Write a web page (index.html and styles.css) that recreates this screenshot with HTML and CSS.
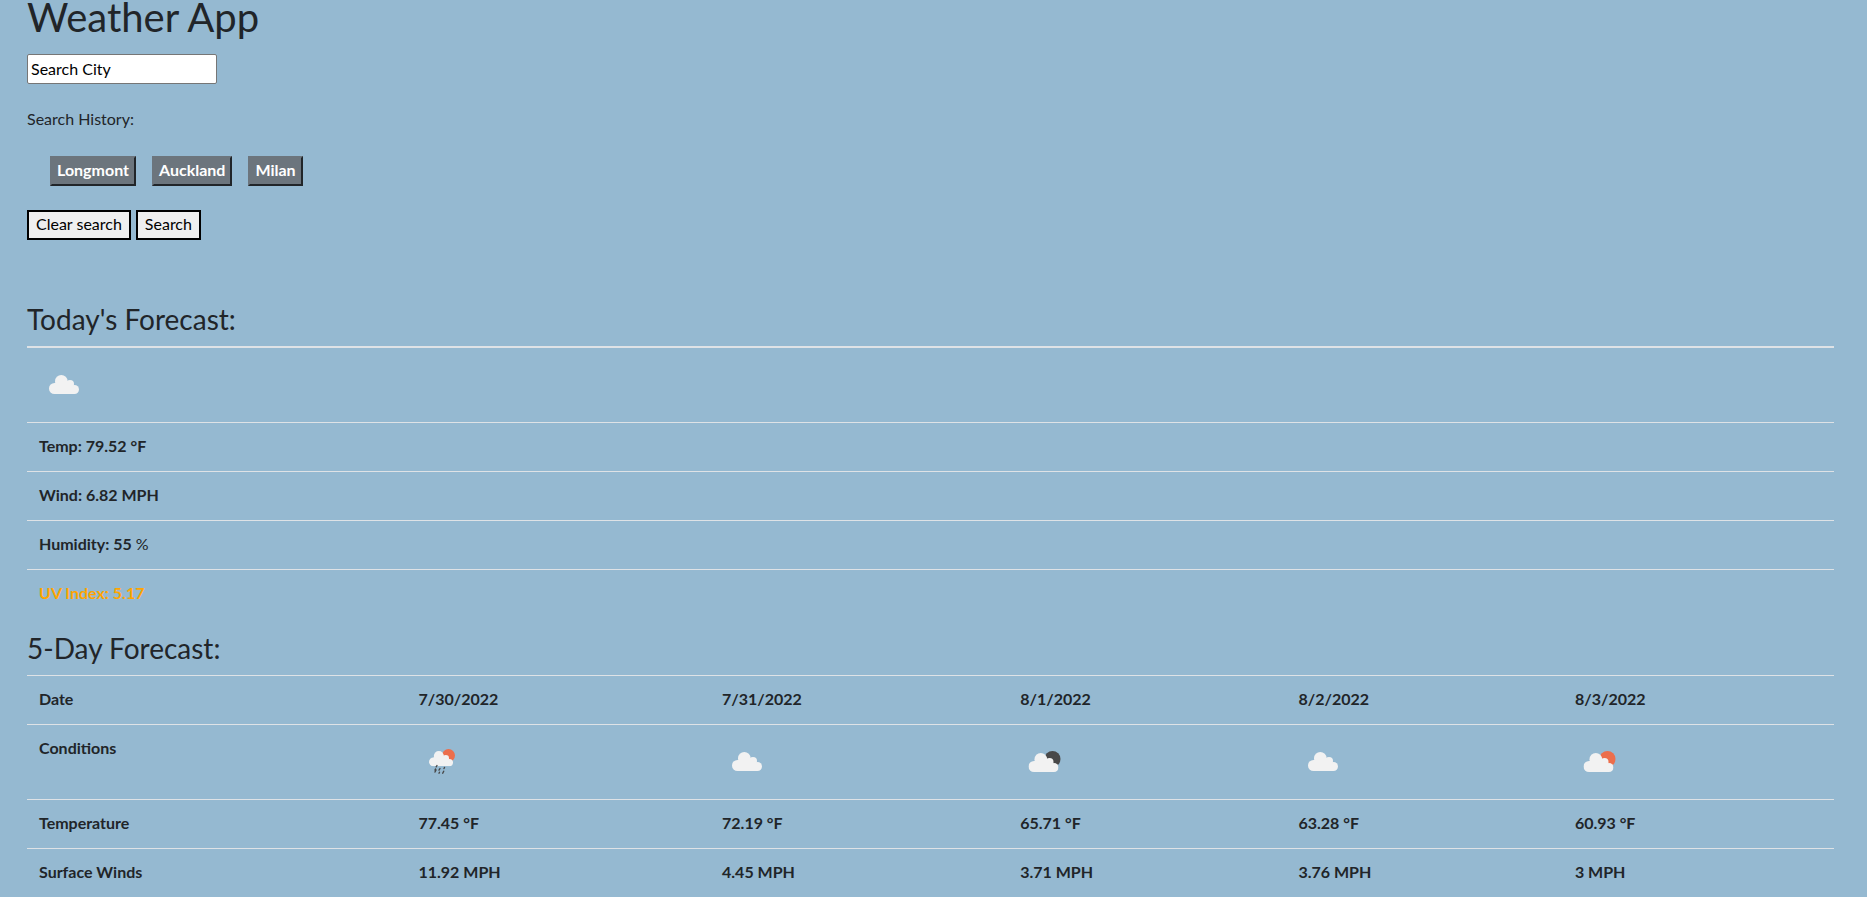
FILE: index.html
```html
<!DOCTYPE html>
<html lang="en">
<head>
<meta charset="utf-8">
<title>Weather App</title>
<link rel="stylesheet" href="styles.css">
</head>
<body>
<svg class="symbols" aria-hidden="true">
  <symbol id="cloud" viewBox="0 0 30 19">
    <circle cx="5.500" cy="13.500" r="5.500"/>
    <circle cx="12.300" cy="6.300" r="6.300"/>
    <circle cx="21" cy="9" r="4"/>
    <circle cx="25.500" cy="14.500" r="4.500"/>
    <path d="M5.500 19V8L12 6L21 8L25.500 13V19Z"/>
  </symbol>
  <symbol id="cloudy" viewBox="0 0 50 50">
    <use href="#cloud" x="10" y="16" width="30" height="19" fill="#f2f2f2"/>
  </symbol>
  <symbol id="partly" viewBox="0 0 50 50">
    <circle cx="32.500" cy="23" r="8"/>
    <use href="#cloud" x="8.500" y="17" width="30" height="19" fill="#f2f2f2"/>
  </symbol>
  <symbol id="rain" viewBox="0 0 50 50">
    <circle cx="30.500" cy="19.500" r="6.500" fill="#ec6e4c"/>
    <use href="#cloud" x="11" y="15" width="24" height="15.200" fill="#f2f2f2"/>
    <path d="M19 29.500l-.8 1.300M22 32.500l-1 1.600M26.500 31.500l-.5 1M18 34l-1 2M21.500 36.200l-.5 1M25.700 35.200l-1 2M17.500 33l-.5 1" stroke="#484848" stroke-width="1.400" stroke-linecap="round"/>
  </symbol>
</svg>
<main class="page">
  <header>
    <h1 class="title">Weather App</h1>
    <form class="search">
      <input class="city" type="text" value="Search City" aria-label="Search City">
      <p class="label">Search History:</p>
      <div class="history">
        <button class="past" type="button">Longmont</button>
        <button class="past" type="button">Auckland</button>
        <button class="past" type="button">Milan</button>
      </div>
      <div class="actions">
        <button class="action" type="reset">Clear search</button>
        <button class="action" type="button">Search</button>
      </div>
    </form>
  </header>
  <section>
    <h2 class="heading">Today's Forecast:</h2>
    <table class="table today">
      <tbody>
        <tr><th><svg class="icon" role="img" aria-label="Cloudy"><use href="#cloudy"/></svg></th></tr>
        <tr><th>Temp: 79.52 °F</th></tr>
        <tr><th>Wind: 6.82 MPH</th></tr>
        <tr><th>Humidity: 55 <span class="unit">%</span></th></tr>
        <tr><th class="moderate">UV Index: 5.17</th></tr>
      </tbody>
    </table>
  </section>
  <section>
    <h2 class="heading">5-Day Forecast:</h2>
    <table class="table days">
      <colgroup><col class="c1"><col class="c2"><col class="c3"><col class="c4"><col class="c5"><col class="c6"></colgroup>
      <tbody>
        <tr><th>Date</th><th>7/30/2022</th><th>7/31/2022</th><th>8/1/2022</th><th>8/2/2022</th><th>8/3/2022</th></tr>
        <tr><th>Conditions</th>
          <th><svg class="icon" role="img" aria-label="Rain"><use href="#rain"/></svg></th>
          <th><svg class="icon" role="img" aria-label="Cloudy"><use href="#cloudy"/></svg></th>
          <th><svg class="icon night" role="img" aria-label="Partly cloudy night"><use href="#partly"/></svg></th>
          <th><svg class="icon" role="img" aria-label="Cloudy"><use href="#cloudy"/></svg></th>
          <th><svg class="icon sun" role="img" aria-label="Partly sunny"><use href="#partly"/></svg></th></tr>
        <tr><th>Temperature</th><th>77.45 °F</th><th>72.19 °F</th><th>65.71 °F</th><th>63.28 °F</th><th>60.93 °F</th></tr>
        <tr><th>Surface Winds</th><th>11.92 MPH</th><th>4.45 MPH</th><th>3.71 MPH</th><th>3.76 MPH</th><th>3 MPH</th></tr>
      </tbody>
    </table>
  </section>
</main>
</body>
</html>
```
FILE: styles.css
```css
* { box-sizing: border-box; }
body {
  margin: 0;
  background: #95b9d1;
  color: #212529;
  font-family: "Trebuchet MS", Lato, sans-serif;
  font-size: 16px;
  line-height: 24px;
}
.symbols { display: none; }
.page { padding: 0 33px 0 27px; }
.title {
  margin: 0 0 20px;
  font-size: 40px;
  font-weight: 400;
  line-height: 34px;
}
.search { margin: 0 0 62px; }
.city {
  display: block;
  width: 190px;
  height: 30px;
  padding: 0 3px 2px;
  border: 1px solid #767676;
  border-radius: 2px;
  background: #fff;
  color: #000;
  font: inherit;
}
.label { margin: 23px 0 25px; }
.history { display: flex; gap: 16px; margin: 0 0 24px 23px; }
.past {
  height: 30px;
  padding: 0 5px 2px;
  border: 2px solid;
  border-color: #6c757d #212529 #212529 #6c757d;
  background: #6c757d;
  color: #fff;
  font: inherit;
  font-weight: 700;
}
.actions { display: flex; gap: 5px; }
.action {
  height: 30px;
  padding: 0 7px 2px;
  border: 2px solid #000;
  background: #efefef;
  color: #000;
  font: inherit;
}
.heading {
  margin: 0 0 10px;
  font-size: 28px;
  font-weight: 400;
  line-height: 34px;
}
.table {
  width: 100%;
  margin: 0;
  border-spacing: 0;
  table-layout: fixed;
}
.table th {
  padding: 11px 12px 13px;
  border-top: 1px solid #dee2e6;
  font-weight: 700;
  text-align: left;
  vertical-align: top;
}
.today { margin-bottom: 13px; }
.today tr:first-child th { border-top-width: 2px; }
.table .moderate { color: #ffa500; }
.unit { font-weight: 400; }
.c1 { width: 21%; }
.c2 { width: 16.8%; }
.c3 { width: 16.5%; }
.c4 { width: 15.4%; }
.c5 { width: 15.3%; }
.c6 { width: 15%; }
.icon { display: block; width: 50px; height: 50px; }
.night { fill: #484848; }
.sun { fill: #ec6e4c; }
```
